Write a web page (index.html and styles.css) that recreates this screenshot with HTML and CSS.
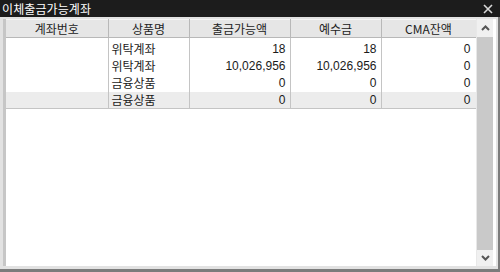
FILE: index.html
```html
<!DOCTYPE html>
<html lang="ko">
<head>
<meta charset="utf-8">
<link rel="stylesheet" href="styles.css">
</head>
<body>
<div class="window">
  <div class="titlebar">
    <span class="title">이체출금가능계좌</span>
    <svg class="close" width="10" height="10" viewBox="0 0 10 10"><path d="M1 1 L9 9 M9 1 L1 9" stroke="#d8d8d8" stroke-width="1.6" fill="none"/></svg>
  </div>
  <div class="frame">
    <div class="inner">
      <div class="grid-area">
        <table class="grid">
          <colgroup>
            <col class="c1"><col class="c2"><col class="c3"><col class="c4"><col class="c5">
          </colgroup>
          <thead>
            <tr><th>계좌번호</th><th>상품명</th><th>출금가능액</th><th>예수금</th><th>CMA잔액</th></tr>
          </thead>
          <tbody>
            <tr class="first"><td></td><td class="txt">위탁계좌</td><td class="num">18</td><td class="num">18</td><td class="num">0</td></tr>
            <tr><td></td><td class="txt">위탁계좌</td><td class="num">10,026,956</td><td class="num">10,026,956</td><td class="num">0</td></tr>
            <tr><td></td><td class="txt">금융상품</td><td class="num">0</td><td class="num">0</td><td class="num">0</td></tr>
            <tr class="sel"><td></td><td class="txt">금융상품</td><td class="num">0</td><td class="num">0</td><td class="num">0</td></tr>
          </tbody>
        </table>
      </div>
      <div class="scrollbar">
        <div class="sbtn"><svg width="9" height="6" viewBox="0 0 9 6"><path d="M1 5 L4.5 1.5 L8 5" stroke="#555" stroke-width="2" fill="none"/></svg></div>
        <div class="track"></div>
        <div class="sbtn down"><svg width="9" height="6" viewBox="0 0 9 6"><path d="M1 1 L4.5 4.5 L8 1" stroke="#555" stroke-width="2" fill="none"/></svg></div>
      </div>
    </div>
  </div>
</div>
</body>
</html>
```
FILE: styles.css
```css
* { box-sizing: border-box; }
html, body { margin: 0; padding: 0; background: #ffffff; }
.window {
  width: 500px;
  height: 272px;
  display: flex;
  flex-direction: column;
  background: #e2e2e2;
  font-family: "Noto Sans CJK KR", "Liberation Sans", sans-serif;
  font-size: 12px;
  color: #1a1a1a;
}
.titlebar {
  height: 17px;
  background: #1c1c1c;
  color: #ffffff;
  display: flex;
  align-items: center;
  justify-content: space-between;
  padding: 0 7px 0 2px;
}
.title { font-size: 12px; line-height: 17px; letter-spacing: 0.1px; }
.close { display: block; }
.frame {
  flex: 1;
  display: flex;
  padding: 2px 2px 3px 3px;
  border-bottom: 3px solid #7c7c7c;
  border-right: 2px solid #7c7c7c;
}
.inner {
  flex: 1;
  display: flex;
  background: #ffffff;
  border-left: 3px solid #c6c6c6;
  padding-right: 2px;
}
.grid-area { width: 470px; }
.grid {
  width: 470px;
  border-collapse: collapse;
  table-layout: fixed;
}
col.c1 { width: 102px; }
col.c2 { width: 81px; }
col.c3 { width: 101px; }
col.c4 { width: 91px; }
col.c5 { width: 95px; }
.grid th {
  height: 18px;
  padding: 0;
  background: #e6e6e6;
  border-right: 1px solid #b8b8b8;
  border-bottom: 1px solid #b8b8b8;
  border-top: 1px solid #f4f4f4;
  font-weight: normal;
  color: #222;
  font-size: 12px;
  line-height: 16px;
  text-align: center;
}
.grid td {
  height: 17px;
  padding: 0;
  border-right: 1px solid #c4c4c4;
  line-height: 16px;
  white-space: nowrap;
  overflow: hidden;
}
.grid tr.first td { height: 20px; padding-top: 3px; }
.grid td.txt { padding-left: 3px; }
.grid td.num {
  text-align: right;
  padding-right: 4px;
  font-family: "Liberation Sans", sans-serif;
  font-size: 12px;
}
.grid td.num:last-child { padding-right: 5px; }
.grid tr.sel td {
  background: #ececec;
  border-bottom: 1px solid #c4c4c4;
}
.scrollbar {
  width: 17px;
  display: flex;
  flex-direction: column;
  border-left: 1px solid #e8e8e8;
}
.sbtn {
  height: 18px;
  background: #f0f0f0;
  display: flex;
  align-items: center;
  justify-content: center;
}
.sbtn.down { height: 16px; }
.track {
  flex: 1;
  background: #c9c9c9;
}
```
